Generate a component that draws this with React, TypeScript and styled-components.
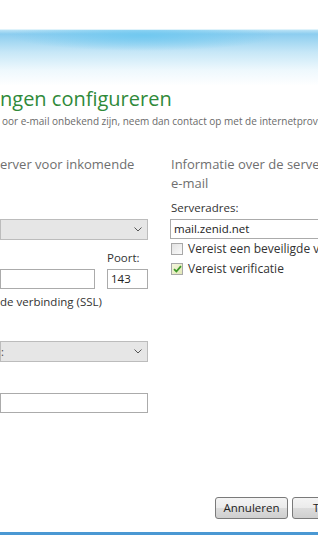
import styled, { createGlobalStyle } from "styled-components"

const Global = createGlobalStyle`
  html, body { margin: 0; padding: 0; background: #fff; }
  * { box-sizing: border-box; }
`

const Page = styled.div`
  width: 318px;
  height: 535px;
  overflow: hidden;
  display: flex;
  flex-direction: column;
  background: #fff;
  font-family: "Open Sans", "Noto Sans", sans-serif;
  color: #333;
`

const Sky = styled.div`
  margin-top: 29px;
  height: 56px;
  flex: none;
  background:
    radial-gradient(ellipse 60% 40% at 45% 10%, rgba(110, 200, 240, 0.9), rgba(110, 200, 240, 0) 70%),
    linear-gradient(180deg, #b9e2f6 0px, #8ccdef 4px, #c6e7f7 22px, #eef8fd 40px, #fff 56px);
  border-top: 1px solid #dff3fb;
`

const Title = styled.h1`
  margin: 1px 0 0 0;
  font-size: 20px;
  font-weight: 400;
  line-height: 26px;
  color: #2f8a3a;
  white-space: nowrap;
`

const Subtitle = styled.p`
  margin: 2px 0 0 2px;
  font-size: 10px;
  line-height: 14px;
  color: #6a6a6a;
  white-space: nowrap;
`

const Columns = styled.div`
  display: grid;
  grid-template-columns: 148px 1fr;
  column-gap: 22px;
  margin-top: 27px;
`

const Column = styled.div<{ $indent?: number }>`
  display: flex;
  flex-direction: column;
  padding-left: ${p => p.$indent ?? 0}px;
  min-width: 0;
`

const Heading = styled.div`
  font-size: 13px;
  line-height: 19px;
  color: #6f6f6f;
  white-space: nowrap;
`

const Label = styled.div<{ $top?: number }>`
  font-size: 11.5px;
  line-height: 15px;
  color: #333;
  margin-top: ${p => p.$top ?? 0}px;
  white-space: nowrap;
`

const TextBox = styled.div<{ $w?: string; $top?: number }>`
  width: ${p => p.$w ?? "100%"};
  height: 20px;
  margin-top: ${p => p.$top ?? 0}px;
  border: 1px solid #ababab;
  background: #fff;
  font-size: 11.5px;
  line-height: 18px;
  padding-left: 3px;
  color: #222;
  white-space: nowrap;
  overflow: hidden;
`

const Select = styled.div<{ $top?: number }>`
  height: 21px;
  margin-top: ${p => p.$top ?? 0}px;
  border: 1px solid #bcbcbc;
  background: #e6e6e6;
  display: flex;
  align-items: center;
  justify-content: space-between;
  padding: 0 5px 0 0;
  font-size: 11px;
  color: #444;
`

const Chevron = () => (
  <svg width="8" height="5" viewBox="0 0 8 5">
    <path d="M0.5 0.5 L4 4 L7.5 0.5" fill="none" stroke="#555" strokeWidth="1" />
  </svg>
)

const PortRow = styled.div`
  display: flex;
  align-items: flex-end;
  gap: 12px;
  margin-top: 10px;
`

const PortField = styled.div`
  display: flex;
  flex-direction: column;
  gap: 4px;
`

const CheckRow = styled.label<{ $top?: number }>`
  display: flex;
  align-items: center;
  gap: 5px;
  margin-top: ${p => p.$top ?? 0}px;
  font-size: 12px;
  line-height: 15px;
  color: #333;
  white-space: nowrap;
`

const Box = styled.span<{ $checked?: boolean }>`
  width: 12px;
  height: 12px;
  flex: none;
  border: 1px solid #a8a8a8;
  background: ${p => (p.$checked ? "linear-gradient(135deg, #f4f6dc, #e2e8b8)" : "linear-gradient(135deg, #e2e2e2, #fafafa)")};
  display: flex;
  align-items: center;
  justify-content: center;
`

const Tick = () => (
  <svg width="9" height="8" viewBox="0 0 9 8">
    <path d="M1 4.2 L3.4 6.5 L8 1.2" fill="none" stroke="#3f9a2a" strokeWidth="1.8" />
  </svg>
)

const Footer = styled.div`
  margin-top: auto;
  display: flex;
  justify-content: flex-end;
  gap: 4px;
  padding: 0 0 13px 0;
  margin-right: -47px;
`

const Button = styled.div`
  width: 73px;
  height: 22px;
  border: 1px solid #7a7a7a;
  border-radius: 3px;
  background: linear-gradient(180deg, #f4f4f4 0%, #ebebeb 50%, #dcdcdc 51%, #cfcfcf 100%);
  font-size: 11.5px;
  line-height: 20px;
  text-align: center;
  color: #222;
`

const BottomLine = styled.div`
  height: 3px;
  flex: none;
  background: #4a98d3;
`

export default function App() {
  return (
    <Page>
      <Global />
      <Sky />
      <Title>ngen configureren</Title>
      <Subtitle>oor e-mail onbekend zijn, neem dan contact op met de internetprovider.</Subtitle>
      <Columns>
        <Column>
          <Heading>erver voor inkomende</Heading>
          <Select $top={45}>
            <span />
            <Chevron />
          </Select>
          <PortRow>
            <TextBox $w="96px" />
            <PortField>
              <Label>Poort:</Label>
              <TextBox $w="41px">143</TextBox>
            </PortField>
          </PortRow>
          <Label $top={5}>de verbinding (SSL)</Label>
          <Select $top={32}>
            <span>:</span>
            <Chevron />
          </Select>
          <TextBox $top={31} />
        </Column>
        <Column $indent={1}>
          <Heading>Informatie over de server voor uitgaande</Heading>
          <Heading>e-mail</Heading>
          <Label $top={7}>Serveradres:</Label>
          <TextBox $w="160px" $top={4} style={{ marginLeft: -1 }}>mail.zenid.net</TextBox>
          <CheckRow $top={2}>
            <Box />
            Vereist een beveiligde verbinding (SSL)
          </CheckRow>
          <CheckRow $top={5}>
            <Box $checked>
              <Tick />
            </Box>
            Vereist verificatie
          </CheckRow>
        </Column>
      </Columns>
      <Footer>
        <Button>Annuleren</Button>
        <Button>Terug</Button>
      </Footer>
      <BottomLine />
    </Page>
  )
}
